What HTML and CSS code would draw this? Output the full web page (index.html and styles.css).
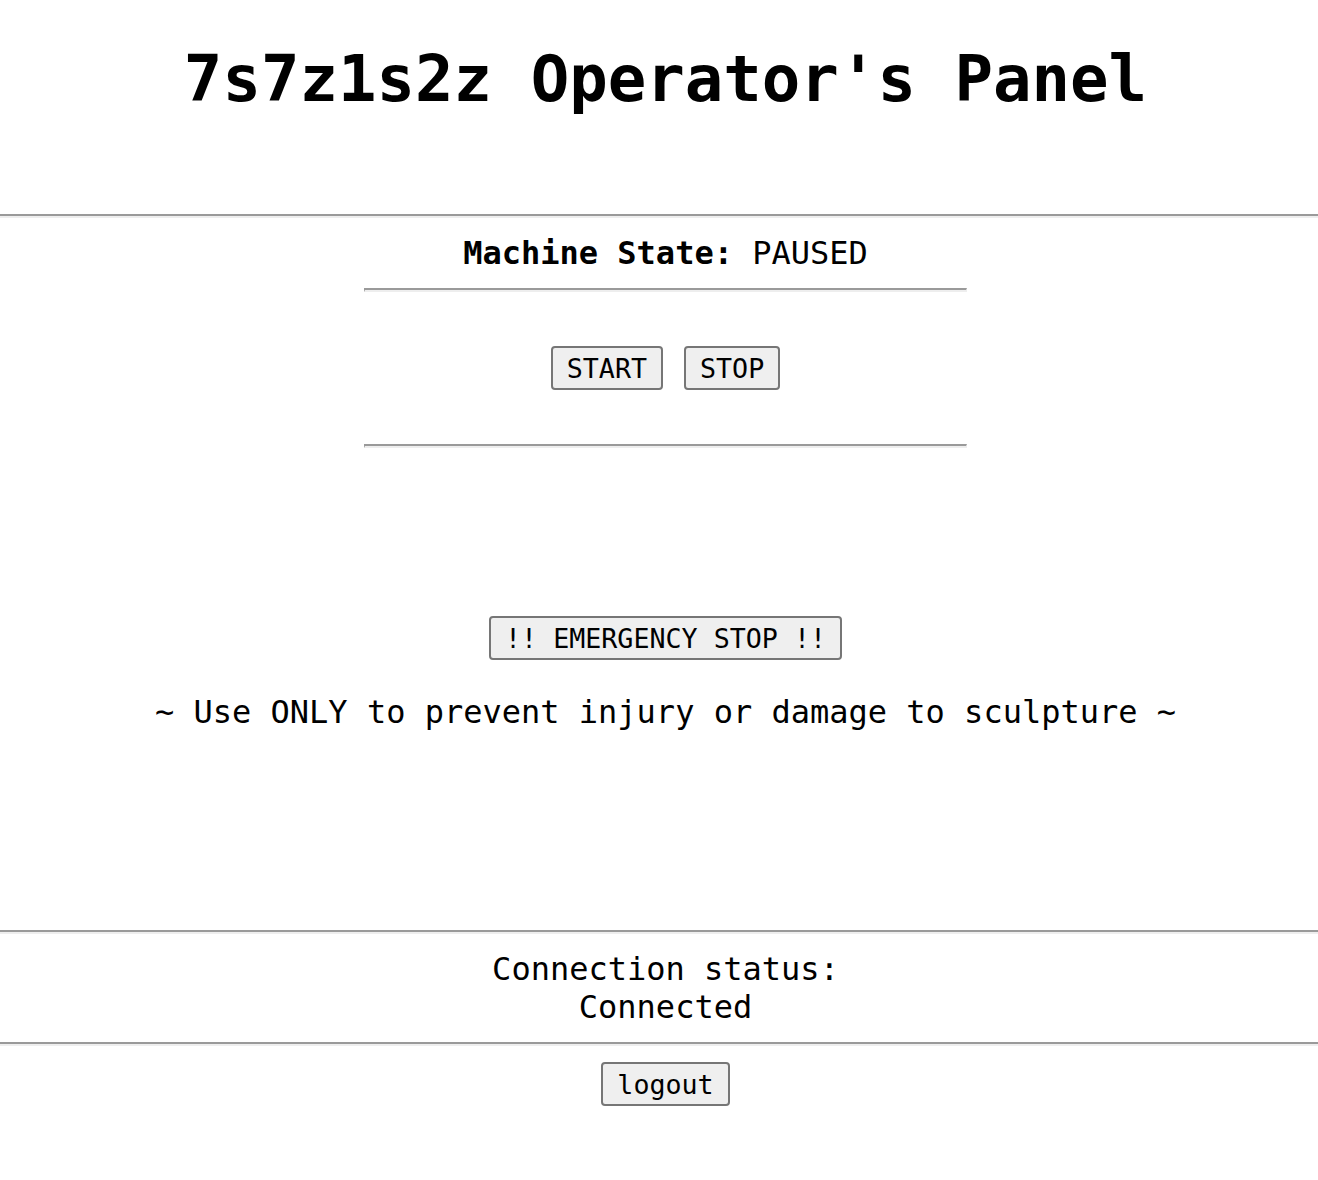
FILE: index.html
```html
<!DOCTYPE html>
<html>
<head>
<meta charset="utf-8">
<title>7s7z1s2z Operator's Panel</title>
<link rel="stylesheet" href="styles.css">
</head>
<body>
<header class="header centered">
  <h1 class="title">7s7z1s2z Operator's Panel</h1>
</header>
<hr class="rule rule-full">
<section class="machine centered">
  <div class="state"><span class="state-label">Machine State:</span> PAUSED</div>
  <hr class="rule rule-inner">
  <div class="controls">
    <button class="btn">START</button>
    <button class="btn">STOP</button>
  </div>
  <hr class="rule rule-inner">
</section>
<section class="emergency centered">
  <button class="btn">!! EMERGENCY STOP !!</button>
  <p class="warning">~ Use ONLY to prevent injury or damage to sculpture ~</p>
</section>
<hr class="rule rule-full">
<section class="connection centered">
  <div>Connection status:</div>
  <div>Connected</div>
</section>
<hr class="rule rule-full">
<footer class="footer centered">
  <button class="btn">logout</button>
</footer>
</body>
</html>
```

FILE: styles.css
```css
html, body {
  margin: 0;
  padding: 0;
  background: #ffffff;
}

body {
  font-family: "DejaVu Sans Mono", "Liberation Mono", monospace;
  font-size: 32px;
  color: #000000;
}

.centered {
  padding-left: 13px;
  text-align: center;
}

.header {
  padding-top: 42px;
  padding-bottom: 98px;
}

.title {
  margin: 0;
  font-size: 64px;
  font-weight: bold;
  line-height: normal;
}

.rule {
  display: block;
  height: 0;
  margin: 0;
  border: 0;
  border-top: 2px solid #9a9a9a;
  border-bottom: 2px solid #eeeeee;
}

.rule-full {
  width: 100%;
}

.rule-inner {
  box-sizing: border-box;
  width: 603px;
  margin: 0 auto;
  border-left: 1px solid #9a9a9a;
  border-right: 1px solid #eeeeee;
}

.machine {
  padding-top: 16px;
}

.state {
  padding-bottom: 16px;
}

.state-label {
  font-weight: bold;
}

.controls {
  display: flex;
  justify-content: center;
  gap: 21px;
  padding: 54px 0;
}

.btn {
  font-family: "DejaVu Sans Mono", "Liberation Mono", monospace;
  font-size: 26.67px;
  line-height: normal;
  color: #000000;
  background: #efefef;
  border: 2px solid #767676;
  border-radius: 4px;
  padding: 4.5px 14px;
  margin: 0;
}

.emergency {
  padding-top: 168px;
  padding-bottom: 199px;
}

.warning {
  margin: 33px 0 0 0;
}

.connection {
  padding: 16px 0 16px 13px;
}

.footer {
  padding-top: 16px;
  padding-bottom: 40px;
}
```
